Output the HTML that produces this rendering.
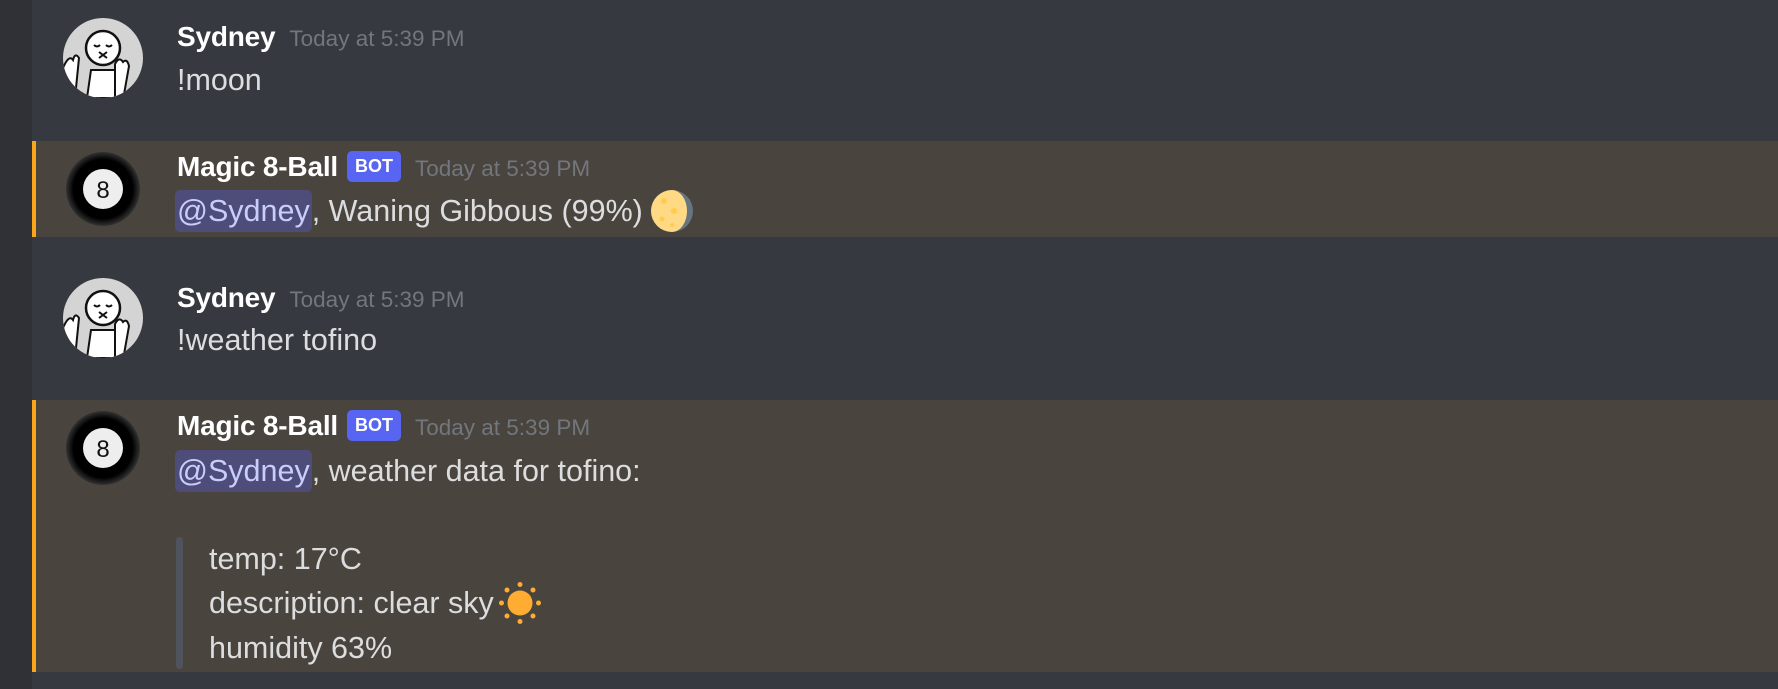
<!DOCTYPE html>
<html><head><meta charset="utf-8"><style>
*{margin:0;padding:0;box-sizing:border-box}
body{width:1778px;height:689px;background:#36393f;position:relative;overflow:hidden;font-family:"Liberation Sans",sans-serif}
.strip{position:absolute;left:0;top:0;width:32px;height:689px;background:#2f3136}
.hl{position:absolute;left:32px;right:0;background:#4a443f;border-left:4px solid #faa61a}
.t{position:absolute;white-space:nowrap;line-height:44px;height:44px}
.name{font-size:28px;font-weight:bold;color:#fff;letter-spacing:-0.2px}
.ts{font-size:22.5px;color:#72767d;margin-left:14px;font-weight:normal;letter-spacing:0}
.msg{font-size:30.5px;color:#dcddde}
.men{background:#4e4c78;color:#c9cdfb;border-radius:5px;padding:4px 2px}
.bot{display:inline-block;background:#5865f2;color:#fff;font-size:18px;font-weight:bold;line-height:30px;height:31px;padding:0 8px;border-radius:5px;vertical-align:4px;margin-left:9px;letter-spacing:0}
.av{position:absolute;width:80px;height:80px}
.qb{position:absolute;left:176px;top:537px;width:7px;height:132px;background:#4f545c;border-radius:4px}
.em{display:inline-block;vertical-align:top;margin-left:7px}
</style></head><body>
<div class="strip"></div>
<div class="hl" style="top:141px;height:96px"></div>
<div class="hl" style="top:400px;height:272px"></div>

<svg class="av" style="left:63px;top:18px" viewBox="0 0 80 80"><defs><clipPath id="c1"><circle cx="40" cy="40" r="40"/></clipPath></defs><g clip-path="url(#c1)"><rect width="80" height="80" fill="#d4d4d4"/><path d="M28 52 L24 80 L56 80 L52 52Z" fill="#fff" stroke="#111" stroke-width="2"/><circle cx="40" cy="30" r="17" fill="#fff" stroke="#111" stroke-width="2.5"/><path d="M31 27 q3 3 6 0 M43 27 q3 3 6 0" stroke="#111" stroke-width="2" fill="none"/><path d="M36 34 l8 6 M44 34 l-8 6" stroke="#111" stroke-width="2"/><path d="M0 50 q6 -14 10 -8 q2 -8 6 -2 l-4 40 L0 80Z" fill="#fff" stroke="#111" stroke-width="2"/><path d="M52 46 q4 -8 8 -2 q4 -4 6 4 l-6 34 L52 80Z" fill="#fff" stroke="#111" stroke-width="2"/></g></svg>
<svg class="av" style="left:63px;top:278px" viewBox="0 0 80 80"><defs><clipPath id="c2"><circle cx="40" cy="40" r="40"/></clipPath></defs><g clip-path="url(#c2)"><rect width="80" height="80" fill="#d4d4d4"/><path d="M28 52 L24 80 L56 80 L52 52Z" fill="#fff" stroke="#111" stroke-width="2"/><circle cx="40" cy="30" r="17" fill="#fff" stroke="#111" stroke-width="2.5"/><path d="M31 27 q3 3 6 0 M43 27 q3 3 6 0" stroke="#111" stroke-width="2" fill="none"/><path d="M36 34 l8 6 M44 34 l-8 6" stroke="#111" stroke-width="2"/><path d="M0 50 q6 -14 10 -8 q2 -8 6 -2 l-4 40 L0 80Z" fill="#fff" stroke="#111" stroke-width="2"/><path d="M52 46 q4 -8 8 -2 q4 -4 6 4 l-6 34 L52 80Z" fill="#fff" stroke="#111" stroke-width="2"/></g></svg>

<svg class="av" style="left:63px;top:149px" viewBox="0 0 80 80"><defs><radialGradient id="g" cx="50%" cy="50%" r="50%"><stop offset="0.8" stop-color="#000"/><stop offset="1" stop-color="#333"/></radialGradient></defs><circle cx="40" cy="40" r="37" fill="url(#g)"/><circle cx="40" cy="40" r="20" fill="#eee"/><text x="40" y="49" text-anchor="middle" font-family="Liberation Sans" font-size="24" fill="#111">8</text></svg>
<svg class="av" style="left:63px;top:408px" viewBox="0 0 80 80"><circle cx="40" cy="40" r="37" fill="url(#g)"/><circle cx="40" cy="40" r="20" fill="#eee"/><text x="40" y="49" text-anchor="middle" font-family="Liberation Sans" font-size="24" fill="#111">8</text></svg>

<div class="t name" style="left:177px;top:15px">Sydney<span class="ts">Today at 5:39 PM</span></div>
<div class="t msg" style="left:177px;top:58px">!moon</div>

<div class="t name" style="left:177px;top:145px">Magic 8-Ball<span class="bot">BOT</span><span class="ts">Today at 5:39 PM</span></div>
<div class="t msg" style="left:175px;top:189px"><span class="men">@Sydney</span>, Waning Gibbous (99%)<svg class="em" width="44" height="44" viewBox="0 0 44 44"><circle cx="22" cy="22" r="21" fill="#66757f"/><path d="M22 1 A21 21 0 0 0 22 43 A15 21 0 0 0 22 1Z" fill="#ffd983"/><circle cx="14" cy="12" r="3" fill="#ffcc4d"/><circle cx="24" cy="22" r="3" fill="#ffcc4d"/><circle cx="12" cy="30" r="2.5" fill="#ffcc4d"/><circle cx="22" cy="36" r="2" fill="#ffcc4d"/></svg></div>

<div class="t name" style="left:177px;top:276px">Sydney<span class="ts">Today at 5:39 PM</span></div>
<div class="t msg" style="left:177px;top:318px">!weather tofino</div>

<div class="t name" style="left:177px;top:404px">Magic 8-Ball<span class="bot">BOT</span><span class="ts">Today at 5:39 PM</span></div>
<div class="t msg" style="left:175px;top:449px"><span class="men">@Sydney</span>, weather data for tofino:</div>
<div class="qb"></div>
<div class="t msg" style="left:209px;top:537px">temp: 17°C</div>
<div class="t msg" style="left:209px;top:581px">description: clear sky<svg class="em" style="margin-left:4px" width="44" height="44" viewBox="0 0 44 44"><g fill="#ffac33"><circle cx="22" cy="22" r="12.5"/><circle cx="22" cy="3.5" r="2.5"/><circle cx="22" cy="40.5" r="2.5"/><circle cx="3.5" cy="22" r="2.5"/><circle cx="40.5" cy="22" r="2.5"/><circle cx="9" cy="9" r="2.5"/><circle cx="35" cy="9" r="2.5"/><circle cx="9" cy="35" r="2.5"/><circle cx="35" cy="35" r="2.5"/></g></svg></div>
<div class="t msg" style="left:209px;top:626px">humidity 63%</div>
</body></html>
